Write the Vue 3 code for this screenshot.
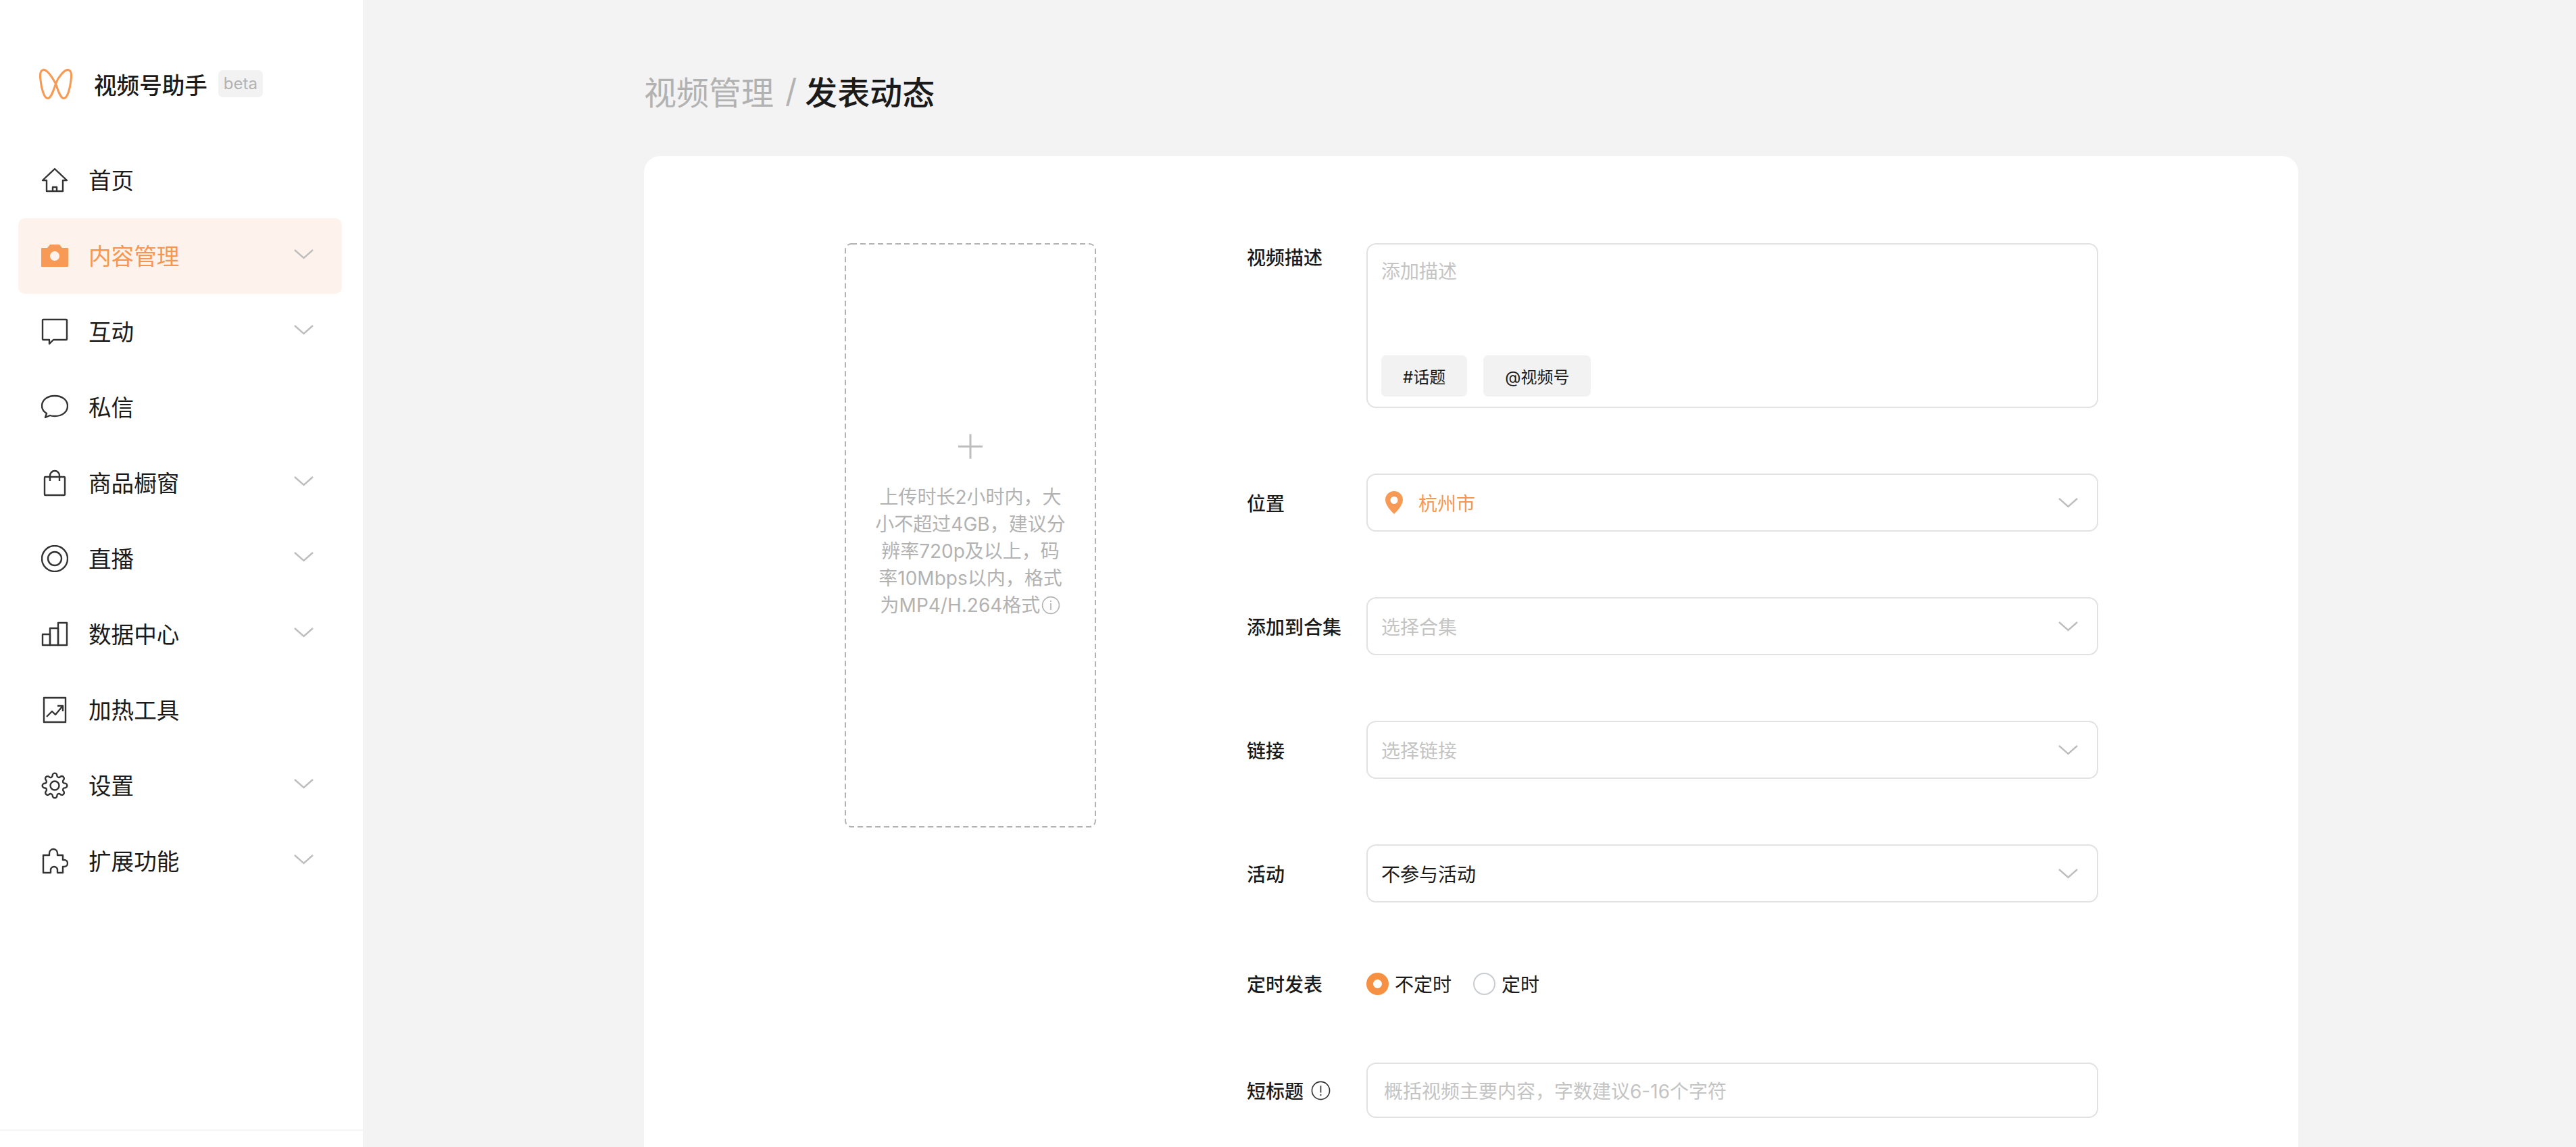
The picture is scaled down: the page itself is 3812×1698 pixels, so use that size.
<script setup>
const icons = {
  home: ['M20 3 L38 20 H32 V36 H8 V20 H2 Z', 'M17 36 V30 H23 V36'],
  comment: ['M3 2 H37 Q38 2 38 3 V31 Q38 32 37 32 H18 L12 38 V32 H3 Q2 32 2 31 V3 Q2 2 3 2 Z'],
  chat: ['M6 35 L8 29 C3 26 1 22 1 18 C1 9 9 3 20 3 C31 3 39 9 39 18 C39 27 31 33 20 33 C17 33 15 33 13 32 Z'],
  bag: ['M6 11 H34 Q35 11 35 12 V37 Q35 38 34 38 H6 Q5 38 5 37 V12 Q5 11 6 11 Z', 'M13 17 V9 A7 7 0 0 1 27 9 V17'],
  live: ['M20 1 A19 19 0 1 1 20 39 A19 19 0 1 1 20 1 Z', 'M20 10 A10 10 0 1 1 20 30 A10 10 0 1 1 20 10 Z'],
  data: ['M2 20 H13 V36 H2 Z', 'M13 11 H25 V36 H13 Z', 'M25 3 H38 V36 H25 Z'],
  tool: ['M4 2 H36 V38 H4 Z', 'M8 30 L16 22 L21 27 L31 15', 'M24 14 H32 V22'],
  gear: [
    'M32.3 25a2.75 2.75 0 0 0 .55 3.03l.1.1a3.33 3.33 0 0 1 0 4.72 3.33 3.33 0 0 1-4.72 0l-.1-.1a2.75 2.75 0 0 0-3.03-.55 2.75 2.75 0 0 0-1.67 2.52V35a3.33 3.33 0 0 1-6.67 0v-.15A2.75 2.75 0 0 0 15 32.3a2.75 2.75 0 0 0-3.03.55l-.1.1a3.33 3.33 0 0 1-4.72 0 3.33 3.33 0 0 1 0-4.72l.1-.1a2.75 2.75 0 0 0 .55-3.03 2.75 2.75 0 0 0-2.52-1.67H5a3.33 3.33 0 0 1 0-6.67h.15A2.75 2.75 0 0 0 7.7 15a2.75 2.75 0 0 0-.55-3.03l-.1-.1a3.33 3.33 0 0 1 0-4.72 3.33 3.33 0 0 1 4.72 0l.1.1a2.75 2.75 0 0 0 3.03.55H15a2.75 2.75 0 0 0 1.67-2.52V5a3.33 3.33 0 0 1 6.67 0v.15A2.75 2.75 0 0 0 25 7.7a2.75 2.75 0 0 0 3.03-.55l.1-.1a3.33 3.33 0 0 1 4.72 0 3.33 3.33 0 0 1 0 4.72l-.1.1a2.75 2.75 0 0 0-.55 3.03V15a2.75 2.75 0 0 0 2.52 1.67H35a3.33 3.33 0 0 1 0 6.67h-.15A2.75 2.75 0 0 0 32.3 25z',
    'M20 13.5 A6.5 6.5 0 1 1 20 26.5 A6.5 6.5 0 1 1 20 13.5 Z'
  ],
  puzzle: ['M3 37 V11 H12 V8 A6 6 0 0 1 24 8 V11 H32 V18 H34 A5 5 0 0 1 34 28 H32 V37 H24 V33 A5 5 0 0 0 14 33 V37 Z']
}

const navItems = [
  { label: '首页', icon: 'home' },
  { label: '内容管理', camera: true, active: true, more: true },
  { label: '互动', icon: 'comment', more: true },
  { label: '私信', icon: 'chat' },
  { label: '商品橱窗', icon: 'bag', more: true },
  { label: '直播', icon: 'live', more: true },
  { label: '数据中心', icon: 'data', more: true },
  { label: '加热工具', icon: 'tool' },
  { label: '设置', icon: 'gear', more: true },
  { label: '扩展功能', icon: 'puzzle', more: true }
]

const selects = [
  { label: '添加到合集', text: '选择合集', muted: true },
  { label: '链接', text: '选择链接', muted: true },
  { label: '活动', text: '不参与活动' }
]
</script>

<template>
  <div class="page">
    <aside class="sidebar">
      <div class="brand">
        <svg class="logo" viewBox="0 0 50 46" fill="none" stroke="currentColor" stroke-width="3.2">
          <path d="M25 23 C19 12 12 1 6 2 C1 3 1 10 2 17 C3 28 7 45 13 45 C18 45 22 32 25 23 C28 14 38 1 44 2 C49 3 49 10 48 17 C47 28 43 45 37 45 C32 45 28 32 25 23 Z" />
        </svg>
        <span class="brand-name">视频号助手</span>
        <span class="beta">beta</span>
      </div>
      <nav class="nav">
        <div v-for="item in navItems" :key="item.label" class="nav-item" :class="{ active: item.active }">
          <svg v-if="item.camera" class="nav-icon" viewBox="0 0 40 40">
            <path fill="currentColor" fill-rule="evenodd" d="M13 3 H27 L31 8 H39 Q40 8 40 9 V35 Q40 36 39 36 H1 Q0 36 0 35 V9 Q0 8 1 8 H9 Z M20 13 A7 7 0 1 0 20 27 A7 7 0 1 0 20 13 Z" />
          </svg>
          <svg v-else class="nav-icon" viewBox="0 0 40 40" fill="none" stroke="currentColor" stroke-width="2.4" stroke-linejoin="round">
            <path v-for="d in icons[item.icon]" :key="d" :d="d" />
          </svg>
          <span class="nav-label">{{ item.label }}</span>
          <svg v-if="item.more" class="chev nav-chev" viewBox="0 0 29 15" fill="none" stroke="currentColor" stroke-width="2.4">
            <path d="M1 1 L14.5 13 L28 1" />
          </svg>
        </div>
      </nav>
      <div class="side-foot"></div>
    </aside>

    <main class="main">
      <h1 class="crumb"><span class="crumb-parent">视频管理</span><span class="crumb-sep">/</span><span class="crumb-current">发表动态</span></h1>
      <section class="card">
        <div class="upload">
          <svg class="dash" width="372" height="865" fill="none" stroke="#b2b2b2" stroke-width="2" stroke-dasharray="8 5">
            <rect x="1" y="1" width="370" height="863" rx="9" />
          </svg>
          <svg class="plus" viewBox="0 0 36 36" stroke="currentColor" stroke-width="3"><path d="M18 0 V36 M0 18 H36" /></svg>
          <p class="upload-tip">上传时长2小时内，大小不超过4GB，建议分辨率720p及以上，码率10Mbps以内，格式为MP4/H.264格式<svg class="tip-icon" viewBox="0 0 28 28" fill="none" stroke="currentColor" stroke-width="1.6"><circle cx="14" cy="14" r="12.4" /><path d="M14 11 V21 M14 7 V9" /></svg></p>
        </div>

        <form class="form">
          <div class="row row-desc">
            <label class="label">视频描述</label>
            <div class="box textarea">
              <div class="placeholder">添加描述</div>
              <div class="tags">
                <span class="tag">#话题</span>
                <span class="tag">@视频号</span>
              </div>
            </div>
          </div>

          <div class="row">
            <label class="label">位置</label>
            <div class="box select">
              <svg class="pin" viewBox="0 0 26 34"><path fill="currentColor" fill-rule="evenodd" d="M13 0 C20 0 26 5.500 26 13 C26 21 17 30 13 34 C9 30 0 21 0 13 C0 5.500 6 0 13 0 Z M13 8 A5.500 5.500 0 1 0 13 19 A5.500 5.500 0 1 0 13 8 Z" /></svg>
              <span class="loc">杭州市</span>
              <svg class="chev select-chev" viewBox="0 0 29 15" fill="none" stroke="currentColor" stroke-width="2.4"><path d="M1 1 L14.5 13 L28 1" /></svg>
            </div>
          </div>

          <div v-for="s in selects" :key="s.label" class="row">
            <label class="label">{{ s.label }}</label>
            <div class="box select">
              <span :class="s.muted ? 'placeholder' : 'value'">{{ s.text }}</span>
              <svg class="chev select-chev" viewBox="0 0 29 15" fill="none" stroke="currentColor" stroke-width="2.4"><path d="M1 1 L14.5 13 L28 1" /></svg>
            </div>
          </div>

          <div class="row row-radio">
            <label class="label">定时发表</label>
            <span class="radio checked"></span><span class="radio-text">不定时</span>
            <span class="radio second"></span><span class="radio-text">定时</span>
          </div>

          <div class="row row-short">
            <label class="label label-icon">短标题<svg class="warn" viewBox="0 0 28 28" fill="none" stroke="currentColor" stroke-width="1.6"><circle cx="14" cy="14" r="12.6" /><path d="M14 7 V17 M14 19 V21.500" /></svg></label>
            <div class="box input"><span class="placeholder">概括视频主要内容，字数建议6-16个字符</span></div>
          </div>
        </form>
      </section>
    </main>
  </div>
</template>

<style>
html, body { margin: 0; padding: 0; height: 1698px; overflow: hidden; background: #f3f3f3; }
</style>

<style scoped>
.page {
  display: flex;
  height: 1698px;
  overflow: hidden;
  background: #f3f3f3;
  color: #1a1a1a;
  font-family: Inter, "Noto Sans CJK SC", sans-serif;
}
.sidebar {
  width: 537px;
  flex: none;
  display: flex;
  flex-direction: column;
  background: #fff;
}
.brand {
  display: flex;
  align-items: center;
  height: 46px;
  margin-top: 101px;
  padding-left: 58px;
}
.logo { width: 49px; height: 46px; flex: none; color: #f79a55; }
.brand-name { margin-left: 32px; font-size: 33.6px; font-weight: 500; }
.beta {
  margin-left: 16px;
  width: 66px;
  height: 40px;
  line-height: 40px;
  text-align: center;
  border-radius: 7px;
  background: #f2f2f2;
  color: #b2b2b2;
  font-size: 24px;
}
.nav { margin-top: 64px; padding: 0 31px 0 27px; flex: 1; }
.nav-item {
  display: flex;
  align-items: center;
  height: 112px;
  padding: 0 42px 0 34px;
  border-radius: 10px;
  font-size: 33.6px;
  color: #1a1a1a;
}
.nav-item.active { background: #fef3ec; color: #f69650; }
.nav-icon { width: 40px; height: 40px; flex: none; color: #333; }
.active .nav-icon { color: #f79a55; }
.nav-label { margin: 0 0 4px 30px; flex: 1; }
.chev { color: #bdbdbd; flex: none; }
.nav-chev { width: 29px; height: 15px; margin-top: -6px; }
.side-foot { height: 24px; border-top: 2px solid #f5f5f5; }

.main { flex: 1; padding: 0 0 0 416px; }
.crumb {
  display: flex;
  align-items: center;
  height: 72px;
  margin: 98px 0 61px;
  font-size: 48px;
  font-weight: 400;
}
.crumb-parent { color: #b2b2b2; }
.crumb-sep { color: #b2b2b2; margin: 0 12px 0 17px; }
.crumb-current { font-weight: 500; color: #1a1a1a; }
.card {
  display: flex;
  width: 2448px;
  height: 2000px;
  box-sizing: border-box;
  padding: 129px 0 0 297px;
  background: #fff;
  border-radius: 24px;
}
.upload {
  position: relative;
  width: 372px;
  height: 865px;
  flex: none;
  box-sizing: border-box;
  display: flex;
  flex-direction: column;
  align-items: center;
  padding-top: 283px;
}
.dash { position: absolute; left: 0; top: 0; }
.plus { width: 36px; height: 36px; color: #bdbdbd; }
.upload-tip {
  margin: 37px 0 0;
  width: 290px;
  text-align: center;
  font-size: 28px;
  line-height: 40px;
  color: #b2b2b2;
}
.tip-icon { width: 28px; height: 28px; vertical-align: -4px; margin-left: 2px; }

.form { margin-left: 223px; width: 1260px; }
.row { display: flex; align-items: center; margin-top: 97px; }
.row:first-child { margin-top: 0; }
.row-desc { align-items: flex-start; }
.label {
  width: 177px;
  flex: none;
  font-size: 28px;
  font-weight: 500;
  color: #1a1a1a;
}
.label-icon { display: flex; align-items: center; }
.warn { width: 29px; height: 29px; margin-left: 11px; color: #333; }
.box {
  box-sizing: border-box;
  width: 1083px;
  border: 2px solid #e2e2e2;
  border-radius: 14px;
  background: #fff;
  font-size: 28px;
}
.textarea {
  height: 244px;
  padding: 18px 20px 15px;
  display: flex;
  flex-direction: column;
  justify-content: space-between;
}
.placeholder { color: #c4c4c4; }
.value { color: #1a1a1a; }
.tags { display: flex; gap: 24px; }
.tag {
  display: flex;
  align-items: center;
  justify-content: center;
  height: 61px;
  padding: 0 32px;
  border-radius: 7px;
  background: #f2f2f2;
  font-size: 24px;
  color: #1a1a1a;
}
.select {
  display: flex;
  align-items: center;
  height: 86px;
  padding: 0 28px 0 20px;
  justify-content: space-between;
}
.pin { width: 26px; height: 34px; flex: none; color: #f79a55; margin: 0 23px 0 6px; }
.loc { color: #f69650; margin-right: auto; }
.select-chev { width: 29px; height: 15px; }
.row-radio { margin-top: 100px; font-size: 28px; }
.radio {
  box-sizing: border-box;
  width: 33px;
  height: 33px;
  border-radius: 50%;
  border: 2px solid #c9ccd1;
  flex: none;
}
.radio.checked { border: 10px solid #f69144; }
.radio.second { margin-left: 32px; }
.radio-text { margin-left: 9px; }
.row-short { margin-top: 97px; }
.input {
  height: 82px;
  display: flex;
  align-items: center;
  padding-left: 24px;
}
</style>
